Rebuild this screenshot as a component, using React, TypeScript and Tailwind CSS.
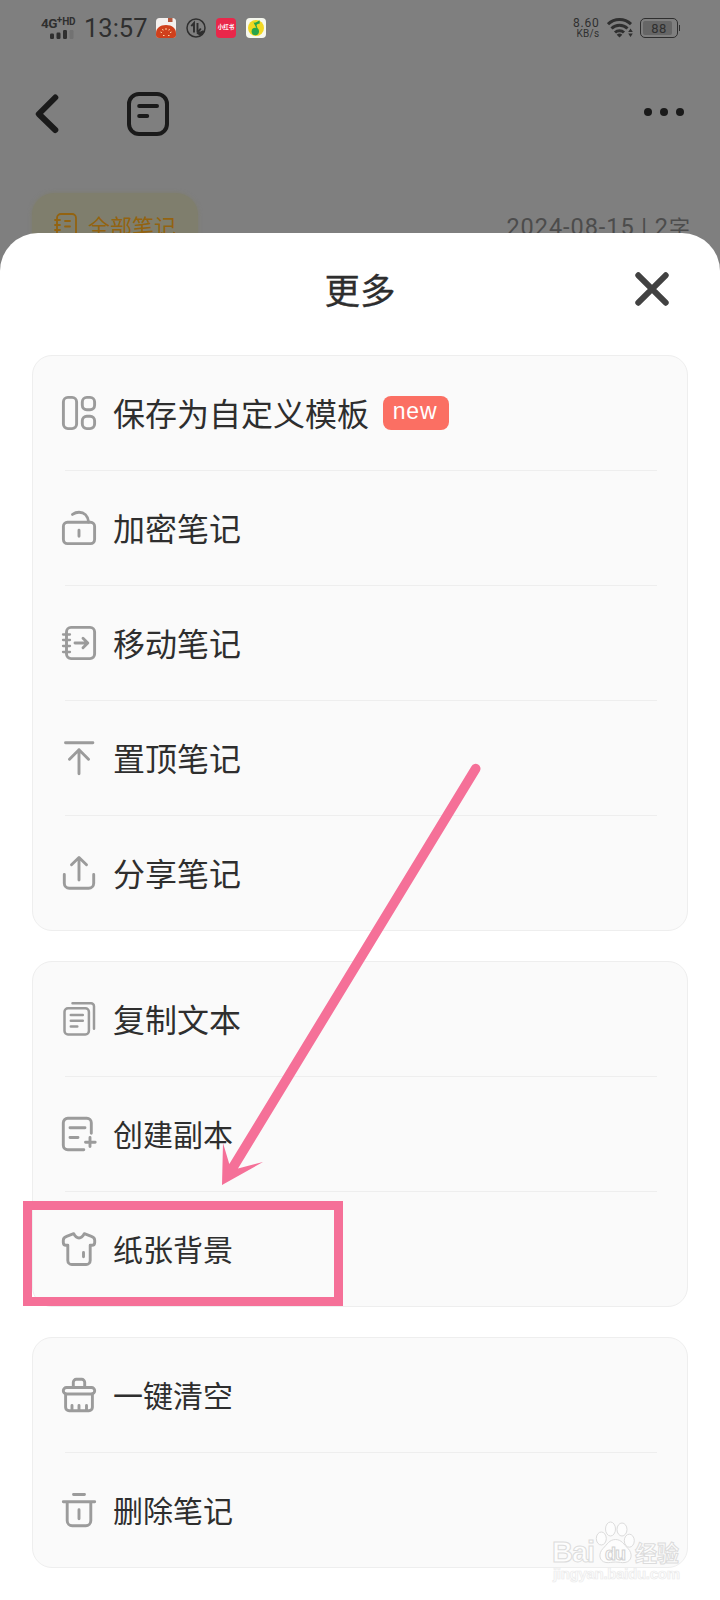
import type { ReactNode } from "react";

type Item = { label: string; icon: ReactNode; badge?: string; small?: boolean };

const Icon = ({ children }: { children: ReactNode }) => (
  <svg
    width="36"
    height="36"
    viewBox="-1 -1 36 36"
    fill="none"
    stroke="#9b9b9b"
    strokeWidth="2.900"
    strokeLinecap="round"
    strokeLinejoin="round"
    className="shrink-0"
  >
    {children}
  </svg>
);

const TemplateIcon = (
  <Icon>
    <rect x="1.400" y="1.400" width="13.200" height="31.200" rx="4.500" />
    <rect x="20.300" y="1.400" width="12.300" height="12.300" rx="4.500" />
    <rect x="20.300" y="20.300" width="12.300" height="12.300" rx="4.500" />
  </Icon>
);
const UnlockIcon = (
  <Icon>
    <rect x="1.400" y="11.300" width="31.200" height="21.300" rx="4" />
    <path d="M10.500 3.400C12.600 2 14.600 1.300 17 1.300c5 0 9 3.600 9.600 9.800M17 19.300v6" />
  </Icon>
);
const MoveIcon = (
  <Icon>
    <rect x="4.500" y="1.400" width="28.100" height="31.200" rx="4.500" />
    <path d="M1 8.500h7M1 14h7M1 20h7M1 26h7" strokeWidth="2.300" />
    <path d="M13 17h12M21 12.300l4.800 4.700-4.800 4.700" />
  </Icon>
);
const TopIcon = (
  <Icon>
    <path d="M3.500 1.700h27.400M17 8.800v24M7.500 18.300 17 8.800l9.500 9.500" />
  </Icon>
);
const ShareIcon = (
  <Icon>
    <path d="M2.300 18.500v8.700a5 5 0 0 0 5 5h19.400a5 5 0 0 0 5-5v-8.700M17 24V1.800M9.500 8.800 17 1.500l7.500 7.300" />
  </Icon>
);
const CopyIcon = (
  <Icon>
    <g strokeWidth="2.500">
      <rect x="2.500" y="6.300" width="24.400" height="26.200" rx="3.500" />
      <path d="M10.500 1.300H29a3 3 0 0 1 3 3v22.500M8.800 13.100h12M8.800 18.700h12M8.800 24.500h6.500" />
    </g>
  </Icon>
);
const DuplicateIcon = (
  <Icon>
    <path d="M21.800 32.700H5.800a4.500 4.500 0 0 1-4.500-4.500V5.800a4.500 4.500 0 0 1 4.500-4.500h19a4.500 4.500 0 0 1 4.500 4.500v10.500M8 10.700h15M8 20.500h8M28 20.500v9M23.500 25.200h9.700" />
  </Icon>
);
const ShirtIcon = (
  <Icon>
    <path d="M11.700 1.700 4.600 4.300C2.600 5 1.300 6.500 1.300 8.300v2.200c0 1.600 1.100 2.800 2.700 2.800h1.800v15.200a4 4 0 0 0 4 4h14.400a4 4 0 0 0 4-4V13.300H30c1.600 0 2.700-1.200 2.700-2.800V8.300c0-1.800-1.300-3.300-3.300-4l-7.100-2.600C21 4.500 19.200 6 17 6S13 4.500 11.700 1.700ZM21.500 20.500v4.300" />
  </Icon>
);
const SweepIcon = (
  <Icon>
    <path d="M11.300 9.500V4.300a3 3 0 0 1 3-3h5.400a3 3 0 0 1 3 3v5.200" />
    <rect x="1.300" y="9.500" width="31.400" height="6.500" rx="3.200" />
    <path d="M3.600 16v13.200a3.500 3.500 0 0 0 3.500 3.500h19.800a3.500 3.500 0 0 0 3.500-3.500V16M10 27.500v4.500M17 27.500v4.500M24.500 27.500v4.500" />
  </Icon>
);
const TrashIcon = (
  <Icon>
    <path d="M11.500 1.500h11M1.300 8.700h31.400M5.200 8.700v19a5 5 0 0 0 5 5h13.600a5 5 0 0 0 5-5v-19M17 16.700v9" />
  </Icon>
);

const groups: Item[][] = [
  [
    { label: "保存为自定义模板", icon: TemplateIcon, badge: "new" },
    { label: "加密笔记", icon: UnlockIcon },
    { label: "移动笔记", icon: MoveIcon },
    { label: "置顶笔记", icon: TopIcon },
    { label: "分享笔记", icon: ShareIcon },
  ],
  [
    { label: "复制文本", icon: CopyIcon },
    { label: "创建副本", icon: DuplicateIcon, small: true },
    { label: "纸张背景", icon: ShirtIcon, small: true },
  ],
  [
    { label: "一键清空", icon: SweepIcon, small: true },
    { label: "删除笔记", icon: TrashIcon, small: true },
  ],
];

function StatusBar() {
  return (
    <div className="flex h-14 items-center pr-10 pl-[41px] text-[#2f2f2f]">
      <div className="flex w-[38px] flex-col">
        <div className="flex h-[13px] items-start font-['Roboto',sans-serif] leading-none font-bold">
          <span className="text-[13.500px] tracking-[-0.600px]">4G</span>
          <span className="-mt-0.5 text-[10px]">+</span>
          <span className="text-[10px] tracking-tight">HD</span>
        </div>
        <svg width="34" height="9" viewBox="0 0 34 9">
          <rect x="9" y="3.500" width="4" height="5.500" rx="1.200" fill="#2f2f2f" />
          <rect x="15.500" y="2.500" width="4" height="6.500" rx="1.200" fill="#2f2f2f" />
          <rect x="22" y="0" width="4" height="9" rx="1.200" fill="#2f2f2f" />
          <rect x="28.500" y="0" width="4" height="9" rx="1.200" fill="#727272" />
        </svg>
      </div>
      <span className="mt-0.5 ml-[5px] w-16 font-['Roboto',sans-serif] text-[25.500px] leading-none whitespace-nowrap">13:57</span>
      <div className="ml-2 flex items-center gap-2.5">
        <svg width="20" height="20" viewBox="0 0 20 20">
          <rect width="20" height="20" rx="3.500" fill="#f4f0ee" />
          <rect x="12" width="4.500" height="4" fill="#b4563c" />
          <path d="M0 15.500C0 10 4 7 10 7s10 3 10 8.500V17a3 3 0 0 1-3 3H3a3 3 0 0 1-3-3Z" fill="#d0401c" />
          <path d="M10 10v2M6.500 11l.7 1.500M13.500 11l-.7 1.500M4.500 14l1.500.7M15.500 14l-1.500.7M7 17.500h1.500M12 17.500h1.500" stroke="#ffd0a0" strokeWidth="1" fill="none" />
        </svg>
        <svg width="20" height="20" viewBox="0 0 20 20" fill="none" stroke="#2f2f2f" strokeWidth="1.500">
          <circle cx="10" cy="10" r="9" />
          <path d="M5.300 8.200 8 5v9.500M11.500 5v9.500M11.500 15l3.300-4.500" strokeWidth="1.900" />
          <path d="M12 15.500 17.500 13l-3 4Z" fill="#2f2f2f" />
        </svg>
        <div className="flex h-5 w-5 items-center justify-center rounded-[4px] bg-[#e9274a] font-['Noto_Sans_CJK_SC',sans-serif] text-[5.500px] leading-none font-bold whitespace-nowrap text-white">
          小红书
        </div>
        <svg width="20" height="20" viewBox="0 0 20 20">
          <rect width="20" height="20" rx="4" fill="#f6f8ee" />
          <circle cx="10" cy="10" r="8" fill="#f2d822" />
          <path d="M7.500 4.500c2 .5 3.500-.5 6-2.200l.3 3.200c-1.500.3-2.700.8-3.300 1.600l2 7" fill="#27a54a" stroke="none" />
          <circle cx="9.300" cy="13.500" r="3.700" fill="#27a54a" />
        </svg>
      </div>
      <div className="ml-auto flex flex-col items-end font-['Roboto',sans-serif]">
        <span className="text-[12px] leading-3 tracking-[0.800px]">8.60</span>
        <span className="text-[10px] leading-[10px] tracking-[0.300px]">KB/s</span>
      </div>
      <svg className="ml-[7px]" width="26" height="20" viewBox="0 0 26 20" fill="none" stroke="#2f2f2f" strokeWidth="3">
        <path d="M1 6.200a16.500 16.500 0 0 1 23 0M4.500 10.500a11.500 11.500 0 0 1 16 0M8 14.500a6.500 6.500 0 0 1 9 0" />
        <path d="m9.700 16.800 2.800 2.700 2.800-2.700a4 4 0 0 0-5.600 0Z" fill="#2f2f2f" stroke="none" />
        <path d="m23.500 10.500 2.300 3.500h-4.600ZM21.200 15.500h4.600l-2.300 3.500Z" fill="#2f2f2f" stroke="none" />
      </svg>
      <div className="ml-[7px] flex items-center">
        <div className="h-5 w-[38px] rounded-[5px] border-[1.500px] border-[#2f2f2f] p-0.5">
          <div className="flex h-full w-[29px] items-center justify-center rounded-[2px] bg-[#666666] pl-1 font-['Roboto',sans-serif] text-[13px] leading-none tracking-[0.500px]">
            88
          </div>
        </div>
        <div className="ml-px h-[6px] w-[1.500px] bg-[#2f2f2f]" />
      </div>
    </div>
  );
}

function DimmedPage() {
  return (
    <div className="h-[233px] w-full">
      <StatusBar />
      <div className="flex h-[116px] items-center pl-[35px]">
        <svg width="25" height="42" viewBox="0 0 25 42" fill="none" stroke="#1a1a1a" strokeWidth="6" strokeLinecap="round" strokeLinejoin="round">
          <path d="M20.300 4.500 3.800 21l16.500 16" />
        </svg>
        <svg className="ml-[67px]" width="42" height="44" viewBox="0 0 42 44" fill="none" stroke="#1a1a1a" strokeWidth="4" strokeLinecap="round">
          <rect x="2" y="2" width="38" height="40" rx="10" />
          <path d="M12.200 14H30M12.200 24h8" />
        </svg>
        <div className="mr-9 mb-1 ml-auto flex gap-2">
          <i className="h-2 w-2 rounded-full bg-[#1a1a1a]" />
          <i className="h-2 w-2 rounded-full bg-[#1a1a1a]" />
          <i className="h-2 w-2 rounded-full bg-[#1a1a1a]" />
        </div>
      </div>
      <div className="mt-[21px] flex items-start justify-between pr-[30px] pl-8">
        <div className="flex h-[66px] w-[166px] items-center rounded-[22px] bg-[#7f7e6d] pb-0.5 pl-[22px] shadow-[0_0_4px_#7f7e6d]">
          <svg width="24" height="26" viewBox="0 0 24 26" fill="none" stroke="#936310" strokeWidth="1.800" strokeLinecap="round">
            <rect x="3" y="2" width="19" height="23" rx="4" />
            <path d="M1 8h5M1 13h5M1 18h5M11 9h5M11 14.500h5" />
          </svg>
          <span className="ml-[10px] text-[22px] leading-none whitespace-nowrap text-[#936310]">全部笔记</span>
        </div>
        <span className="mt-5 font-['Roboto','Noto_Sans_CJK_SC',sans-serif] text-[23.500px] leading-[28px] tracking-[0.950px] whitespace-nowrap text-[#4c4c4c]">
          2024-08-15 | 2<span className="text-[21px] tracking-normal">字</span>
        </span>
      </div>
    </div>
  );
}

function Row({ item, last }: { item: Item; last: boolean }) {
  return (
    <div className="h-[115px] pl-7">
      <div className="flex h-[114px] items-center">
        {item.icon}
        <span
          className={
            item.small
              ? "mb-0.5 ml-4 text-[30px] leading-none whitespace-nowrap"
              : "mb-0.5 ml-4 text-[32px] leading-none whitespace-nowrap"
          }
        >
          {item.label}
        </span>
        {item.badge && (
          <span className="ml-3.5 flex h-[34px] w-[66px] items-center justify-center rounded-[8px] bg-[#fb6f63] pr-0.5 pb-[3px] font-['Liberation_Sans',sans-serif] text-[23px] leading-none tracking-[0.800px] text-white">
            {item.badge}
          </span>
        )}
      </div>
      {!last && <div className="mr-[30px] ml-1 h-px bg-[#eeeeee]" />}
    </div>
  );
}

function Watermark() {
  return (
    <svg className="absolute top-[1516px] left-[545px]" width="145" height="70" viewBox="0 0 145 70" fill="#fdfdfd" stroke="#dcdcdc" strokeWidth="1">
      <g fontFamily="Liberation Sans, sans-serif" fontWeight="700">
        <text x="7" y="46" fontSize="29" textLength="43">Bai</text>
        <ellipse cx="56.300" cy="22.500" rx="5" ry="6.500" />
        <ellipse cx="65.500" cy="13" rx="5" ry="7" />
        <ellipse cx="77" cy="13.500" rx="5" ry="6.500" />
        <ellipse cx="84.300" cy="24.700" rx="5" ry="6.500" />
        <path d="M70.500 23.500c6 0 8.500 5 12.500 9 5 5 4 13-3 14-3 .5-6-.5-9.500-.5s-6.500 1-9.500.5c-7-1-8-9-3-14 4-4 6.500-9 12.500-9Z" />
        <text x="60" y="44" fontSize="18" textLength="21" stroke="#d2d2d2">du</text>
      </g>
      <text x="90" y="44.500" fontSize="22" fontWeight="700" fontFamily="Noto Sans CJK SC, sans-serif" textLength="44">经验</text>
      <text x="8" y="63" fontSize="15" fontFamily="Liberation Sans, sans-serif" fontWeight="700" textLength="127" stroke="#ebebeb" strokeWidth="0.700">
        jingyan.baidu.com
      </text>
    </svg>
  );
}

export default function App() {
  return (
    <div className="relative flex h-[1600px] w-[720px] flex-col overflow-hidden bg-[#7f7f7f] font-['Noto_Sans_CJK_SC',sans-serif] text-[#2e2e2e]">
      <DimmedPage />
      <main className="relative h-[1367px] w-full shrink-0 rounded-t-[38px] bg-white px-8">
        <header className="grid h-[122px] grid-cols-[1fr_auto_1fr] items-center">
          <h1 className="col-start-2 pb-[11px] text-[35.500px] leading-none font-normal [-webkit-text-stroke:0.300px_#2e2e2e]">更多</h1>
          <button aria-label="关闭" className="mr-[19px] mb-[11px] justify-self-end">
            <svg width="34" height="34" viewBox="0 0 34 34" stroke="#424242" strokeWidth="6" strokeLinecap="round">
              <path d="m3.300 3.300 27.400 27.400m0-27.400L3.300 30.700" />
            </svg>
          </button>
        </header>
        <div className="flex flex-col gap-[30px]">
          {groups.map((items, g) => (
            <section key={g} className="rounded-[20px] border border-[#eeeeee] bg-[#fafafa] [&>div:last-child]:h-[114px]">
              {items.map((item, i) => (
                <Row key={item.label} item={item} last={i === items.length - 1} />
              ))}
            </section>
          ))}
        </div>
      </main>
      <Watermark />
      <div className="absolute top-[1201px] left-[23px] h-[105px] w-[320px] border-[9px] border-[#f57098]" />
      <svg className="absolute top-[750px] left-[200px]" width="300" height="450" viewBox="200 750 300 450" fill="#f57098">
        <path d="M471.500 766.200a4.800 4.800 0 0 1 8.300 5L238 1168.500l25-6.500-41 23 1-42 6.300 21Z" />
      </svg>
    </div>
  );
}
